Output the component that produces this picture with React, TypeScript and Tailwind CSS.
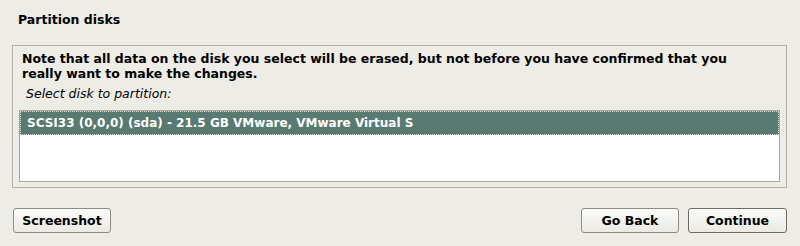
import React from "react";

export default function App() {
  const font = { fontFamily: '"DejaVu Sans", sans-serif' };
  return (
    <div
      className="w-[800px] h-[246px] bg-[#eeece6] text-[12.5px] text-black overflow-hidden flex flex-col"
      style={font}
    >
      <div className="h-[45px] pl-[18px] pt-[12px] font-bold leading-[16px]">Partition disks</div>
      <div className="ml-[12px] w-[775px] h-[143px] border border-[#b3b1a6] flex flex-col">
        <div className="pl-[9px] pt-[5px] font-bold leading-[15px]">
          Note that all data on the disk you select will be erased, but not before you have confirmed that you
          <br />
          really want to make the changes.
        </div>
        <div className="pl-[13px] pt-[5px] italic leading-[15px] h-[25px]">Select disk to partition:</div>
        <div className="ml-[6px] mt-[4px] w-[761px] h-[72px] border border-[#a9a79c] bg-white p-0">
          <div className="h-[24px] bg-[#587a71] border border-dotted border-[#d8e2de] text-white text-[12px] font-bold pl-[6px] leading-[22px]">
            SCSI33 (0,0,0) (sda) - 21.5 GB VMware, VMware Virtual S
          </div>
        </div>
      </div>
      <div className="flex mt-[20px] pl-[13px] pr-[13px]">
        <button className="w-[98px] h-[25px] rounded-[3px] border border-[#8e8b80] bg-gradient-to-b from-[#fbfbf9] to-[#ebe9e2] font-bold leading-[23px] text-center">
          Screenshot
        </button>
        <div className="flex-1" />
        <button className="w-[98px] h-[25px] rounded-[3px] border border-[#8e8b80] bg-gradient-to-b from-[#fbfbf9] to-[#ebe9e2] font-bold leading-[23px] text-center">
          Go Back
        </button>
        <button className="ml-[9px] w-[99px] h-[25px] rounded-[3px] border border-[#6e6b62] bg-gradient-to-b from-[#fbfbf9] to-[#ebe9e2] font-bold leading-[23px] text-center">
          Continue
        </button>
      </div>
    </div>
  );
}
